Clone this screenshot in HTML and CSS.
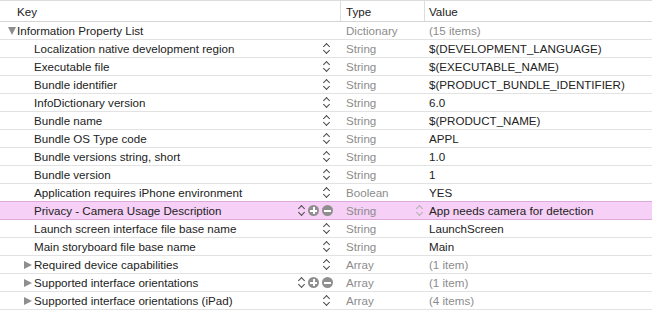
FILE: index.html
```html
<!DOCTYPE html>
<html lang="en">
<head>
    <meta charset="UTF-8">
    <title>Info.plist</title>
    <link rel="stylesheet" href="styles.css">
</head>
<body>
    <div class="plist">
        <div class="row head">
            <div class="key"><span class="label">Key</span></div>
            <div class="type">Type</div>
            <div class="value">Value</div>
        </div>

        <div class="row">
            <div class="key"><span class="tri down"></span><span class="label">Information Property List</span></div>
            <div class="type">Dictionary</div>
            <div class="value dim">(15 items)</div>
        </div>
        <div class="row">
            <div class="key child"><span class="label">Localization native development region</span><span class="stepper"></span></div>
            <div class="type">String</div>
            <div class="value">$(DEVELOPMENT_LANGUAGE)</div>
        </div>
        <div class="row">
            <div class="key child"><span class="label">Executable file</span><span class="stepper"></span></div>
            <div class="type">String</div>
            <div class="value">$(EXECUTABLE_NAME)</div>
        </div>
        <div class="row">
            <div class="key child"><span class="label">Bundle identifier</span><span class="stepper"></span></div>
            <div class="type">String</div>
            <div class="value">$(PRODUCT_BUNDLE_IDENTIFIER)</div>
        </div>
        <div class="row">
            <div class="key child"><span class="label">InfoDictionary version</span><span class="stepper"></span></div>
            <div class="type">String</div>
            <div class="value">6.0</div>
        </div>
        <div class="row">
            <div class="key child"><span class="label">Bundle name</span><span class="stepper"></span></div>
            <div class="type">String</div>
            <div class="value">$(PRODUCT_NAME)</div>
        </div>
        <div class="row">
            <div class="key child"><span class="label">Bundle OS Type code</span><span class="stepper"></span></div>
            <div class="type">String</div>
            <div class="value">APPL</div>
        </div>
        <div class="row">
            <div class="key child"><span class="label">Bundle versions string, short</span><span class="stepper"></span></div>
            <div class="type">String</div>
            <div class="value">1.0</div>
        </div>
        <div class="row">
            <div class="key child"><span class="label">Bundle version</span><span class="stepper"></span></div>
            <div class="type">String</div>
            <div class="value">1</div>
        </div>
        <div class="row">
            <div class="key child"><span class="label">Application requires iPhone environment</span><span class="stepper"></span></div>
            <div class="type">Boolean</div>
            <div class="value">YES</div>
        </div>
        <div class="row selected">
            <div class="key child"><span class="label">Privacy - Camera Usage Description</span><span class="stepper"></span><span class="btn plus"></span><span class="btn minus"></span></div>
            <div class="type">String</div>
            <div class="value"><span class="stepper light"></span>App needs camera for detection</div>
        </div>
        <div class="row">
            <div class="key child"><span class="label">Launch screen interface file base name</span><span class="stepper"></span></div>
            <div class="type">String</div>
            <div class="value">LaunchScreen</div>
        </div>
        <div class="row">
            <div class="key child"><span class="label">Main storyboard file base name</span><span class="stepper"></span></div>
            <div class="type">String</div>
            <div class="value">Main</div>
        </div>
        <div class="row">
            <div class="key child"><span class="tri right"></span><span class="label">Required device capabilities</span><span class="stepper"></span></div>
            <div class="type">Array</div>
            <div class="value dim">(1 item)</div>
        </div>
        <div class="row">
            <div class="key child"><span class="tri right"></span><span class="label">Supported interface orientations</span><span class="stepper"></span><span class="btn plus"></span><span class="btn minus"></span></div>
            <div class="type">Array</div>
            <div class="value dim">(1 item)</div>
        </div>
        <div class="row">
            <div class="key child"><span class="tri right"></span><span class="label">Supported interface orientations (iPad)</span><span class="stepper"></span></div>
            <div class="type">Array</div>
            <div class="value dim">(4 items)</div>
        </div>
    </div>
</body>
</html>
```

FILE: styles.css
```css
body {
    margin: 0;
    background: #fff;
    font-family: "Liberation Sans", Arial, sans-serif;
    font-size: 11.6px;
    color: #222;
}
.plist {
    width: 652px;
}
.row {
    display: grid;
    grid-template-columns: 340px 84px 1fr;
    height: 17px;
    border-bottom: 1px solid #e2e2e2;
    align-items: center;
}
.head {
    height: 20px;
    border-top: 1px solid #dcdcdc;
    border-bottom: 1px solid #d4d4d4;
}
.head .type, .head .value {
    border-left: 1px solid #dedede;
    height: 100%;
    display: flex;
    align-items: center;
    color: #222;
}
.head .type { padding-left: 5px; }
.head .value { padding-left: 4px; }
.key {
    display: flex;
    align-items: center;
    padding-left: 8px;
    height: 100%;
}
.head .key { padding-left: 17px; }
.key.child {
    padding-left: 24px;
}
.key .label {
    flex: 1;
    white-space: nowrap;
    padding-left: 10px;
}
.head .key .label { padding-left: 0; }
.type {
    color: #8c8c8c;
    padding-left: 6px;
}
.value {
    padding-left: 5px;
    display: flex;
    align-items: center;
    white-space: nowrap;
}
.value.dim { color: #8c8c8c; }

.selected {
    background: #f6d0f6;
    border-top: 1px solid #dca9dc;
    border-bottom-color: #dca9dc;
    margin-top: -1px;
}

/* disclosure triangles */
.tri {
    width: 0;
    height: 0;
}
.tri.down {
    border-left: 4.5px solid transparent;
    border-right: 4.5px solid transparent;
    border-top: 8px solid #8e8e8e;
    margin-right: -9px;
}
.tri.right {
    border-top: 4.5px solid transparent;
    border-bottom: 4.5px solid transparent;
    border-left: 8px solid #8e8e8e;
    margin-right: -8px;
}

/* popup stepper: up/down chevrons */
.stepper {
    width: 9px;
    height: 13px;
    margin-right: 9px;
    position: relative;
}
.stepper::before, .stepper::after {
    content: "";
    position: absolute;
    left: 2px;
    width: 4px;
    height: 4px;
    border-left: 1.5px solid #4a4a4a;
    border-top: 1.5px solid #4a4a4a;
}
.stepper::before {
    top: 2px;
    transform: rotate(45deg);
}
.stepper::after {
    bottom: 2px;
    transform: rotate(225deg);
}
.stepper.light {
    margin-left: -14px;
    margin-right: 5px;
}
.stepper.light::before, .stepper.light::after {
    border-color: #b0b0b0;
}

/* add / remove buttons */
.btn {
    width: 11px;
    height: 11px;
    border-radius: 50%;
    background: #8f8f8f;
    position: relative;
    margin-right: 3px;
}
.btn::before, .btn::after {
    content: "";
    position: absolute;
    background: #fff;
}
.btn::before {
    left: 2px;
    right: 2px;
    top: 4.5px;
    height: 2px;
}
.plus::after {
    top: 2px;
    bottom: 2px;
    left: 4.5px;
    width: 2px;
}
.key .stepper + .btn { margin-left: -7px; }
.key .btn.minus { margin-right: 7px; }
```
